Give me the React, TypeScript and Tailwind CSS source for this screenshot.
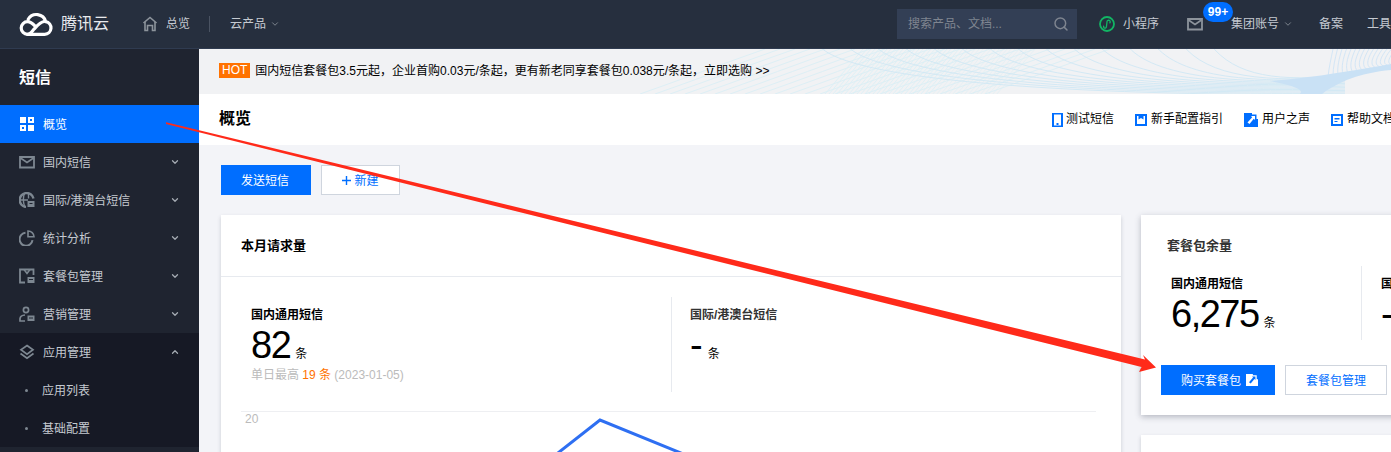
import { ChevronDown, ChevronUp, Search } from "lucide-react";
import type { ReactNode } from "react";

const font = "font-['Liberation_Sans','Noto_Sans_CJK_SC',sans-serif]";

const LogoIcon = () => (
  <svg width="34" height="24" viewBox="0 0 34 24" fill="none" stroke="#fff" strokeWidth="3.2">
    <path d="M8.5 22.3h17.2a6.4 6.4 0 0 0 1-12.7A9.6 9.6 0 0 0 9.2 7.2" strokeLinecap="round" />
    <path d="M25 9.5c-4 .6-6.500 3.800-9.800 7.400-2 2.200-3.700 5.400-6.700 5.400a6.300 6.300 0 0 1 0-12.600c3.300 0 5.300 2 7.600 4.400" strokeLinecap="round" />
  </svg>
);

const Svg = ({ children, size = 16 }: { children: ReactNode; size?: number }) => (
  <svg width={size} height={size} viewBox="0 0 16 16" fill="none">
    {children}
  </svg>
);

const GridIcon = () => (
  <Svg>
    <path d="M1 1h6v6H1zM1 9h6v6H1zM9 9h6v6H9z" fill="#fff" />
    <path d="M9 1h6v6H9z M11 3v2h2V3z" fill="#fff" fillRule="evenodd" />
    <path d="M3 11h2v2H3z" fill="#006eff" />
  </Svg>
);

const MailIcon = ({ color = "#7d8791" }: { color?: string }) => (
  <Svg>
    <path d="M1 3h14v10.500H1z" stroke={color} strokeWidth="1.800" />
    <path d="M1.500 4l6.500 4.500L14.500 4" stroke={color} strokeWidth="1.600" />
  </Svg>
);

const GlobeIcon = () => (
  <Svg>
    <path d="M14.500 6.500A7 7 0 1 0 7 15" stroke="#7d8791" strokeWidth="2.400" />
    <path d="M5.500 1.500c-1.500 3-1.500 9 0 12.500M1 8h8M9.500 1.500v5" stroke="#7d8791" strokeWidth="1.400" />
    <path d="M8.500 9h7v6h-7z" fill="#7d8791" />
    <path d="M10.500 11.500h3" stroke="#1f2430" />
  </Svg>
);

const PieIcon = () => (
  <Svg>
    <path d="M6.500 2.800a6.500 6.500 0 1 0 7 7.400" stroke="#7d8791" strokeWidth="2" />
    <path d="M9 1v5.800h6A6 6 0 0 0 9 1z" stroke="#7d8791" strokeWidth="1.600" />
  </Svg>
);

const PackIcon = () => (
  <Svg>
    <path d="M6 14.500H1V1.500h13.500V7" stroke="#7d8791" strokeWidth="1.800" />
    <path d="M5 1.500l3 4 3-4" stroke="#7d8791" strokeWidth="1.600" />
    <path d="M8.500 9h7v6h-7z" fill="#7d8791" />
    <path d="M10 11.500h4" stroke="#1f2430" />
  </Svg>
);

const PersonIcon = () => (
  <Svg>
    <circle cx="7" cy="4" r="2.600" stroke="#7d8791" strokeWidth="1.700" />
    <path d="M6 9c-2.500.2-4.700 1.300-5 3.500V15h5" stroke="#7d8791" strokeWidth="1.700" />
    <path d="M8.500 9.500h7V15h-7z" fill="#7d8791" />
    <path d="M10 12h4" stroke="#1f2430" />
  </Svg>
);

const LayersIcon = () => (
  <Svg>
    <path d="M8 1.500l6 4.300-6 4.300-6-4.300z" stroke="#7d8791" strokeWidth="1.700" />
    <path d="M1.500 9.500L8 14.300l6.500-4.800" stroke="#7d8791" strokeWidth="1.700" />
  </Svg>
);

const PhoneTool = () => (
  <svg width="11" height="14" viewBox="0 0 11 14">
    <path d="M0 0h11v14H0z M2 1.500v11h7v-11z" fill="#006eff" fillRule="evenodd" />
    <path d="M4.500 10h2v2h-2z" fill="#006eff" />
  </svg>
);

const BookTool = () => (
  <svg width="12" height="12" viewBox="0 0 12 12">
    <path d="M0 0h12v12H0z M2 2v8h8V2H8.500v3.500L6 4 3.500 5.500V2z" fill="#006eff" fillRule="evenodd" />
  </svg>
);

const ExternalTool = ({ color = "#006eff", cut = "#fff", size = 14 }: { color?: string; cut?: string; size?: number }) => (
  <svg width={size} height={size} viewBox="0 0 14 14">
    <path d="M0 0h14v14H0z" fill={color} />
    <path d="M8 0h6v6h-1.500V1.500H8z" fill={cut} />
    <path d="M7 3h4v4L9.800 5.800 5.500 11 3.500 9.500l4.700-5.300z" fill={cut} />
  </svg>
);

const DocTool = () => (
  <svg width="12" height="12" viewBox="0 0 12 12">
    <path d="M0 0h12v12H0z M2 2v8h8V2z" fill="#006eff" fillRule="evenodd" />
    <path d="M3.500 4h5v1.500h-5zM3.500 7h3v1h-3z" fill="#006eff" />
  </svg>
);

const MiniAppIcon = () => (
  <svg width="16" height="16" viewBox="0 0 16 16" fill="none">
    <circle cx="8" cy="8" r="7" stroke="#12b564" strokeWidth="1.800" />
    <path d="M5 9.800a1.400 1.400 0 1 0 2.400 1L8 6a1.600 1.600 0 1 1 2.500 1.200" stroke="#12b564" strokeWidth="1.300" />
  </svg>
);

// decorative line pattern behind the banner, coordinates are relative to x=600
const WaveBg = () => {
  const slanted = Array.from({ length: 24 }, (_, i) => 40 + i * 15);
  const hatch = Array.from({ length: 44 }, (_, i) => 225 + i * 4);
  const arcs = Array.from({ length: 15 }, (_, i) => i);
  const fan = Array.from({ length: 15 }, (_, i) => i);
  return (
    <svg className="absolute top-0 right-0" width="791" height="45" viewBox="0 0 791 45" fill="none">
      {slanted.map((x) => (
        <path key={x} d={`M${x} 45C${x + 40} 31 ${x + 85} 14 ${x + 125} 0`} stroke="#ddeff5" strokeWidth="1" />
      ))}
      {hatch.map((x) => (
        <path key={x} d={`M${x} 45L${x + 38} 0`} stroke="#dbeff5" strokeWidth="1" opacity={x < 330 ? 0.9 : 0.5} />
      ))}
      {arcs.map((k) => (
        <path
          key={k}
          d={`M${610 - k * 28} -5C${635 - k * 28} ${28 + k * 0.5} ${680 - k * 12} ${33 + k} 745 ${26 + k * 1.400}`}
          stroke="#d3e9f4"
          strokeWidth="1"
        />
      ))}
      {fan.map((d) => (
        <path
          key={d}
          d={`M${733 + d * 4.500} 0C${731 + d * 4} 10 ${729 + d * 4} 18 ${728 + d * 5} ${28 - d * 0.900}`}
          stroke="#d3e6f6"
          strokeWidth="1"
        />
      ))}
      <path d="M670 32C700 30 740 24 791 15V21C760 24 740 32 722 45H700C705 40 690 36 670 32z" fill="#c9e1f5" />
    </svg>
  );
};

const menu = [
  { label: "国内短信", icon: <MailIcon /> },
  { label: "国际/港澳台短信", icon: <GlobeIcon /> },
  { label: "统计分析", icon: <PieIcon /> },
  { label: "套餐包管理", icon: <PackIcon /> },
  { label: "营销管理", icon: <PersonIcon /> },
];

const tools = [
  { label: "测试短信", icon: <PhoneTool />, gap: "gap-[3px]" },
  { label: "新手配置指引", icon: <BookTool />, gap: "gap-1" },
  { label: "用户之声", icon: <ExternalTool />, gap: "gap-1" },
  { label: "帮助文档", icon: <DocTool />, gap: "gap-1" },
];

const Sidebar = () => (
  <aside className="w-[199px] shrink-0 bg-[#1f2430] text-[#c5cad1]">
    <div className="flex h-[56px] items-center pl-[19px] pt-[2px] text-base font-bold text-white">短信</div>
    <div className="flex h-[38px] items-center bg-[#006eff] pl-[19px] text-white">
      <GridIcon />
      <span className="ml-2 pt-[2px]">概览</span>
    </div>
    {menu.map((m) => (
      <div key={m.label} className="flex h-[38px] items-center pl-[19px] pr-[19px]">
        {m.icon}
        <span className="ml-2 flex-1 pt-[2px]">{m.label}</span>
        <ChevronDown size={10} strokeWidth={3} className="text-[#a5abb3]" />
      </div>
    ))}
    <div className="bg-[#161925]">
      <div className="flex h-[38px] items-center pl-[19px] pr-[19px]">
        <LayersIcon />
        <span className="ml-2 flex-1 pt-[2px]">应用管理</span>
        <ChevronUp size={10} strokeWidth={3} className="text-[#a5abb3]" />
      </div>
      {["应用列表", "基础配置"].map((s) => (
        <div key={s} className="flex h-[38px] items-center pl-[25px]">
          <span className="h-[3px] w-[3px] rounded-full bg-[#7d8791]" />
          <span className="ml-[14px] pt-[2px]">{s}</span>
        </div>
      ))}
    </div>
  </aside>
);

export default function App() {
  return (
    <div className={`${font} relative flex h-[452px] w-[1391px] flex-col overflow-hidden bg-[#f3f4f8] text-xs`}>
      <header className="flex h-[49px] shrink-0 items-center border-b border-[#2f3b50] bg-[#262f3e] text-[#c5cad1]">
        <div className="ml-[19px] flex items-center">
          <LogoIcon />
          <span className="ml-2 text-base text-[#e8eaed]">腾讯云</span>
        </div>
        <svg className="ml-[33px]" width="16" height="16" viewBox="0 0 16 16" fill="none">
          <path d="M1.500 7L8 1.500 14.500 7" stroke="#8d949c" strokeWidth="1.600" />
          <path d="M3 6v8.500h2.500V9.500h5v5H13V6" stroke="#8d949c" strokeWidth="1.600" />
        </svg>
        <span className="ml-2">总览</span>
        <span className="ml-[19px] h-4 w-px bg-[#4a5362]" />
        <span className="ml-5">云产品</span>
        <ChevronDown size={10} className="ml-1 text-[#8d949c]" />
        <div className="ml-auto flex h-[30px] w-[180px] items-center justify-between bg-[#333f55] pl-[11px] pr-2 text-[#7f8590]">
          <span>搜索产品、文档...</span>
          <Search size={16} strokeWidth={2.200} />
        </div>
        <span className="ml-[22px]"><MiniAppIcon /></span>
        <span className="ml-2">小程序</span>
        <div className="relative ml-7">
          <MailIcon color="#8d949c" />
          <span className="absolute -top-[14px] left-4 flex h-5 w-[30px] items-center justify-center rounded-full bg-[#006eff] font-bold text-white">99+</span>
        </div>
        <span className="ml-7">集团账号</span>
        <ChevronDown size={10} className="ml-1 text-[#8d949c]" />
        <span className="ml-[26px]">备案</span>
        <span className="ml-6 w-[24px] shrink-0 whitespace-nowrap">工具</span>
      </header>

      <div className="flex min-h-0 flex-1">
        <Sidebar />
        <main className="min-w-0 flex-1">
          <div className="relative flex h-[45px] items-center overflow-hidden bg-[#f1f2f4] pl-[20px] text-black">
            <WaveBg />
            <span className="relative mb-[2px] bg-[#ff7200] px-[3px] leading-[15px] text-white">HOT</span>
            <span className="relative ml-[5px] pb-[2px]">国内短信套餐包3.5元起，企业首购0.03元/条起，更有新老同享套餐包0.038元/条起，立即选购 &gt;&gt;</span>
          </div>
          <div className="flex h-[51px] items-center overflow-hidden bg-white pl-5 text-black">
            <span className="pb-[2px] text-base font-bold">概览</span>
            <div className="ml-auto flex w-[339px] shrink-0 items-center gap-[21px] whitespace-nowrap">
              {tools.map((t) => (
                <span key={t.label} className={`flex shrink-0 items-center ${t.gap}`}>
                  {t.icon}
                  <span className="pb-[2px]">{t.label}</span>
                </span>
              ))}
            </div>
          </div>
          <div className="pl-[22px] pt-5">
            <div className="flex gap-[10px]">
              <button className="h-[30px] w-[90px] bg-[#006eff] pr-[2px] pt-[2px] text-white">发送短信</button>
              <button className="flex h-[30px] w-[79px] items-center justify-center gap-[3px] border border-[#cfd5de] bg-white pt-[1px] text-[#006eff]">
                <svg width="9" height="9" viewBox="0 0 9 9">
                  <path d="M3.800 0h1.400v3.800H9v1.400H5.200V9H3.800V5.200H0V3.800h3.800z" fill="#006eff" />
                </svg>
                新建
              </button>
            </div>
            <div className="mt-5 flex gap-5">
              <section className="h-[300px] w-[900px] shrink-0 bg-white shadow-[0_2px_4px_rgba(54,58,80,0.22)]">
                <h2 className="flex h-[62px] items-center border-b border-[#e7eaef] pl-5 text-[13px] font-bold text-black">本月请求量</h2>
                <div className="flex pl-[30px] pt-5">
                  <div className="h-[95px] w-[421px] border-r border-[#e7eaef]">
                    <p className="mt-[11px] leading-[14px] font-bold text-black">国内通用短信</p>
                    <p className="mt-[6px] flex items-baseline leading-[34px] text-black">
                      <span className="text-[38px] tracking-[-1.5px]">82</span>
                      <span className="ml-[5px] text-xs">条</span>
                    </p>
                    <p className="mt-[5px] text-[#bbb]">
                      单日最高 <span className="text-[#ff7200]">19 条</span> (2023-01-05)
                    </p>
                  </div>
                  <div className="pl-[18px]">
                    <p className="mt-[11px] leading-[14px] font-bold text-[#333]">国际/港澳台短信</p>
                    <p className="mt-[6px] flex items-baseline leading-[34px] text-black">
                      <span className="text-[38px]">-</span>
                      <span className="ml-[5px] text-xs">条</span>
                    </p>
                  </div>
                </div>
                <div className="relative ml-5 mr-[25px] mt-[19px] h-[60px] border-t border-[#eeeff2]">
                  <span className="absolute -top-px left-1 text-[#bbb]">20</span>
                  <svg className="absolute left-0 top-0" width="855" height="50" viewBox="0 0 855 50" fill="none">
                    <path d="M308 48L359 8L457 48" stroke="#2e6ff2" strokeWidth="3" />
                  </svg>
                </div>
              </section>
              <div className="flex w-[300px] shrink-0 flex-col gap-5">
                <section className="h-[200px] bg-white px-5 shadow-[0_2px_6px_rgba(54,58,80,0.32)]">
                  <h2 className="pl-[6px] pt-[23px] text-[13px] leading-4 font-bold text-[#333]">套餐包余量</h2>
                  <div className="mt-3 flex pl-[10px]">
                    <div className="h-[74px] w-[191px] shrink-0 border-r border-[#e7eaef]">
                      <p className="mt-[11px] leading-[14px] font-bold text-black">国内通用短信</p>
                      <p className="mt-[6px] flex items-baseline leading-[34px] text-black">
                        <span className="text-[38px] tracking-[-1.5px]">6,275</span>
                        <span className="ml-[5px] text-xs">条</span>
                      </p>
                    </div>
                    <div className="shrink-0 pl-[19px] whitespace-nowrap">
                      <p className="mt-[11px] leading-[14px] font-bold text-black">国际/港澳台短信</p>
                      <p className="mt-[6px] text-[38px] leading-[34px] text-black">-</p>
                    </div>
                  </div>
                  <div className="mt-[25px] flex gap-[10px]">
                    <button className="flex h-[30px] w-[114px] items-center gap-[5px] bg-[#006eff] pl-5 text-white">
                      <span className="pt-[2px]">购买套餐包</span>
                      <ExternalTool color="#fff" cut="#006eff" size={12} />
                    </button>
                    <button className="h-[30px] w-[102px] border border-[#cfd5de] bg-white pt-[2px] text-[#006eff]">套餐包管理</button>
                  </div>
                </section>
                <section className="h-[60px] bg-white shadow-[0_2px_4px_rgba(54,58,80,0.22)]" />
              </div>
            </div>
          </div>
        </main>
      </div>

      {/* annotation arrow drawn over the page */}
      <svg className="pointer-events-none absolute left-0 top-0" width="1391" height="452" viewBox="0 0 1391 452">
        <path d="M166 122.200L1145 359.500L1143 355L1156 367.500L1139 372L1141.500 367L166 124z" fill="#ff2a1a" />
      </svg>
    </div>
  );
}
